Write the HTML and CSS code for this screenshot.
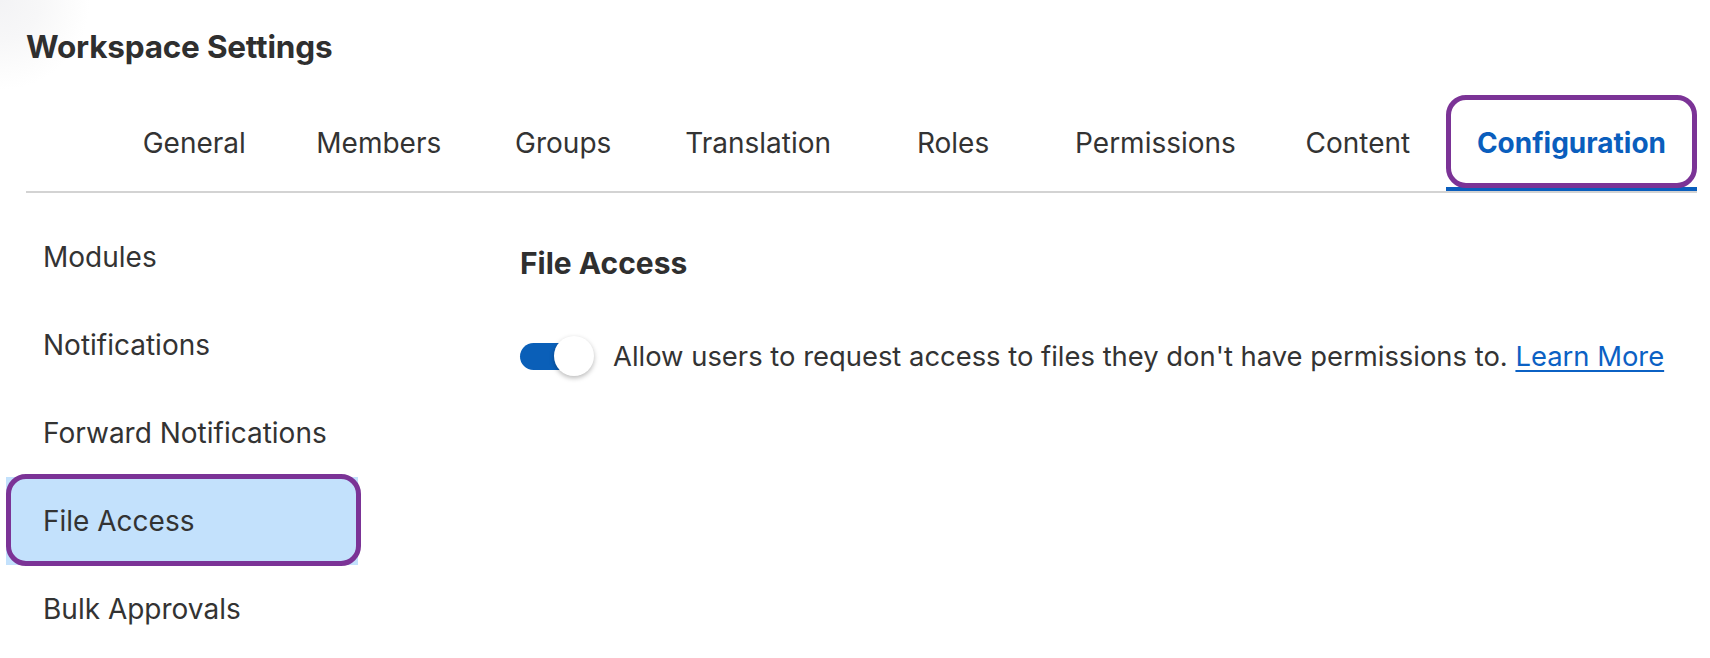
FILE: index.html
```html
<!DOCTYPE html>
<html lang="en">
<head>
<meta charset="utf-8">
<title>Workspace Settings</title>
<link rel="stylesheet" href="styles.css">
</head>
<body>
  <div class="page">
    <header class="header">
      <h1 class="title">Workspace Settings</h1>
      <nav class="tabs">
        <a class="tab">General</a>
        <a class="tab">Members</a>
        <a class="tab">Groups</a>
        <a class="tab">Translation</a>
        <a class="tab">Roles</a>
        <a class="tab">Permissions</a>
        <a class="tab">Content</a>
        <a class="tab tab-active">Configuration<span class="annot annot-tab"></span></a>
      </nav>
    </header>
    <div class="body">
      <aside class="sidebar">
        <a class="side-item">Modules</a>
        <a class="side-item">Notifications</a>
        <a class="side-item">Forward Notifications</a>
        <a class="side-item side-active">File Access<span class="annot annot-side"></span></a>
        <a class="side-item">Bulk Approvals</a>
      </aside>
      <main class="main">
        <h2 class="heading">File Access</h2>
        <div class="setting">
          <span class="toggle"><span class="knob"></span></span>
          <span class="setting-text">Allow users to request access to files they don't have permissions to. <a class="link" href="#">Learn More</a></span>
        </div>
      </main>
    </div>
  </div>
</body>
</html>
```

FILE: styles.css
```css
* { box-sizing: border-box; }
html, body { margin: 0; padding: 0; }
html { background: #ffffff; }
body {
  font-family: Inter, "Liberation Sans", Arial, sans-serif;
  color: #333333;
  width: 1710px;
  height: 658px;
  overflow: hidden;
  background: radial-gradient(circle at 0 0, #f3f3f5 0, #f7f7f8 40px, #fcfcfc 70px, #ffffff 90px) no-repeat;
}
.page { display: flex; flex-direction: column; }

.header { padding: 0 13px 0 26px; }
.title {
  margin: 0;
  padding-top: 27px;
  height: 95px;
  font-size: 31.5px;
  line-height: 40px;
  font-weight: 700;
  letter-spacing: -0.2px;
  color: #2f2f2f;
}
.tabs {
  display: flex;
  justify-content: flex-end;
  border-bottom: 2px solid #d3d3d3;
  height: 98px;
}
.tab {
  position: relative;
  display: flex;
  align-items: center;
  justify-content: center;
  min-width: 176px;
  padding: 0 34px;
  height: 96px;
  font-size: 28px;
  color: #333333;
  white-space: nowrap;
}
.tab-active {
  color: #0a5ebd;
  font-weight: 700;
  border-bottom: 4px solid #0a5ebd;
  padding: 4px 31px 0;
}
.annot {
  position: absolute;
  border: 5px solid #7b3396;
  border-radius: 20px;
  pointer-events: none;
}
.annot-tab { top: 0; left: 0; right: 0; bottom: -1px; }

.body { display: flex; padding-left: 6px; padding-top: 20px; }
.sidebar { width: 352px; display: flex; flex-direction: column; }
.side-item {
  position: relative;
  display: flex;
  align-items: center;
  height: 88px;
  padding-left: 37px;
  font-size: 28px;
  color: #333333;
  white-space: nowrap;
}
.side-active { background: #c3e1fc; }
.annot-side { top: -3px; left: 0; right: -3px; bottom: -1px; }

.main { margin-left: 162px; padding-top: 31px; }
.heading {
  margin: 0;
  font-size: 30px;
  line-height: 38px;
  font-weight: 700;
  color: #2f2f2f;
}
.setting { display: flex; align-items: center; margin-top: 57px; }
.toggle {
  position: relative;
  flex: none;
  width: 70px;
  height: 27px;
  border-radius: 14px;
  background: #0a5fb8;
  margin-right: 23px;
}
.knob {
  position: absolute;
  right: -4px;
  top: -7px;
  width: 40px;
  height: 40px;
  border-radius: 50%;
  background: #ffffff;
  box-shadow: 0 2px 5px rgba(0, 0, 0, 0.28);
}
.setting-text { font-size: 27.4px; white-space: nowrap; color: #333333; }
.link { color: #0b61c4; text-decoration: underline; text-underline-offset: 4px; text-decoration-thickness: 2px; }
```
